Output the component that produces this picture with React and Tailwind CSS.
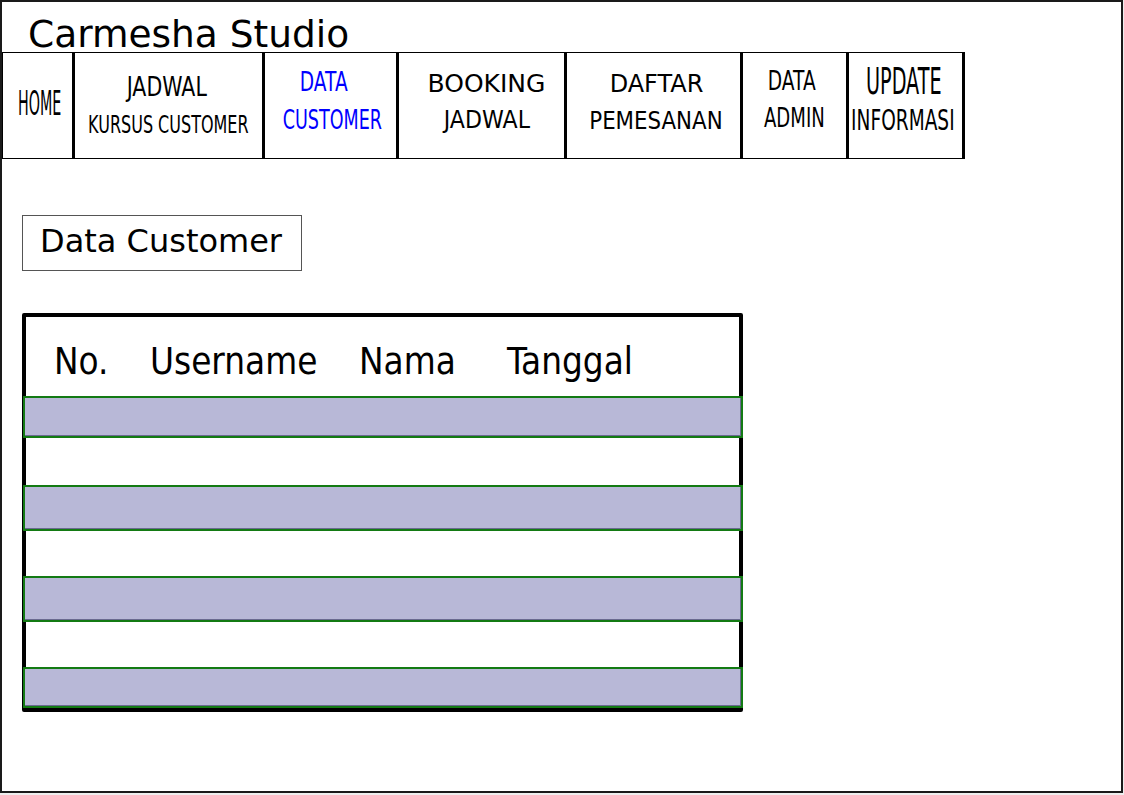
const NAV = [
  {
    w: "w-[72px]",
    pt: "pt-[30px]",
    lines: [{ text: "HOME", cls: "text-[34px] leading-[40px] scale-x-[0.42] translate-x-[2px]" }],
  },
  {
    w: "w-[190px]",
    pt: "pt-[15px]",
    lines: [
      { text: "JADWAL", cls: "text-[27px] leading-[38px] scale-x-[0.76] -translate-x-[2px]" },
      { text: "KURSUS CUSTOMER", cls: "text-[25px] leading-[38px] scale-x-[0.64]" },
    ],
  },
  {
    w: "w-[134px]",
    pt: "pt-[10px]",
    blue: true,
    lines: [
      { text: "DATA", cls: "text-[27px] leading-[38px] scale-x-[0.69] -translate-x-[7px]" },
      { text: "CUSTOMER", cls: "text-[27px] leading-[38px] scale-x-[0.65] translate-x-[2px]" },
    ],
  },
  {
    w: "w-[168px]",
    pt: "pt-[12px]",
    lines: [
      { text: "BOOKING", cls: "text-[25px] leading-[37px] translate-x-[5px]" },
      { text: "JADWAL", cls: "text-[24px] leading-[37px] scale-x-[0.92] translate-x-[5px]" },
    ],
  },
  {
    w: "w-[176px]",
    pt: "pt-[13px]",
    lines: [
      { text: "DAFTAR", cls: "text-[24px] leading-[37px] translate-x-[3px]" },
      { text: "PEMESANAN", cls: "text-[24px] leading-[37px] scale-x-[0.89] translate-x-[2px]" },
    ],
  },
  {
    w: "w-[106px]",
    pt: "pt-[9px]",
    lines: [
      { text: "DATA", cls: "text-[27px] leading-[37px] scale-x-[0.69] -translate-x-[3px]" },
      { text: "ADMIN", cls: "text-[27px] leading-[37px] scale-x-[0.67]" },
    ],
  },
  {
    w: "w-[116px]",
    pt: "pt-[9px]",
    lines: [
      { text: "UPDATE", cls: "text-[37px] leading-[39px] scale-x-[0.52] -translate-x-[2px]" },
      { text: "INFORMASI", cls: "text-[29px] leading-[39px] scale-x-[0.64] -translate-x-[3px]" },
    ],
  },
];

const ROWS = [
  { h: "h-[42px]", gap: "h-[47px]" },
  { h: "h-[46px]", gap: "h-[45px]" },
  { h: "h-[46px]", gap: "h-[45px]" },
  { h: "h-[41px]", gap: null },
];

export default function App() {
  return (
    <div className="w-[1124px] h-[795px] bg-[#eeeeee] font-['DejaVu_Sans',sans-serif] text-black">
      <div className="w-[1123px] h-[793px] bg-white border-2 border-[#1a1a1a]">
        <div className="h-[50px] pl-[26px] pt-[14px] text-[37.5px] leading-[37px]">Carmesha Studio</div>

        <nav className="flex w-fit h-[107px] border-y border-l border-black">
          {NAV.map((cell, i) => (
            <div
              key={i}
              className={`${cell.w} ${cell.pt} h-full border-r-[3px] border-black flex flex-col ${cell.blue ? "text-[#0000ff]" : ""}`}
            >
              {cell.lines.map((ln) => (
                <div key={ln.text} className="flex justify-center">
                  <span className={`inline-block whitespace-nowrap ${ln.cls}`}>{ln.text}</span>
                </div>
              ))}
            </div>
          ))}
        </nav>

        <div className="ml-[20px]">
          <div className="mt-[56px] w-[280px] h-[56px] border border-[#555555] pl-[17px] text-[32px] leading-[50px]">
            Data Customer
          </div>

          <div className="mt-[42px] w-[721px] border-4 border-black rounded-[2px]">
            <div className="flex h-[79px] pt-[9px] pl-[28px] text-[36.5px] leading-[72px] font-['DejaVu_Sans_Condensed','DejaVu_Sans',sans-serif]">
              <span className="w-[96px]">No.</span>
              <span className="w-[209px]">Username</span>
              <span className="w-[148px]">Nama</span>
              <span>Tanggal</span>
            </div>
            {ROWS.map((r, i) => (
              <div key={i}>
                <div
                  className={`${r.h} -ml-[3px] -mr-[4px] border-2 border-[#137a13] bg-[#b8b8d7] shadow-[inset_-1px_-1px_0_#6a6a90]`}
                />
                {r.gap && <div className={r.gap} />}
              </div>
            ))}
          </div>
        </div>
      </div>
    </div>
  );
}
